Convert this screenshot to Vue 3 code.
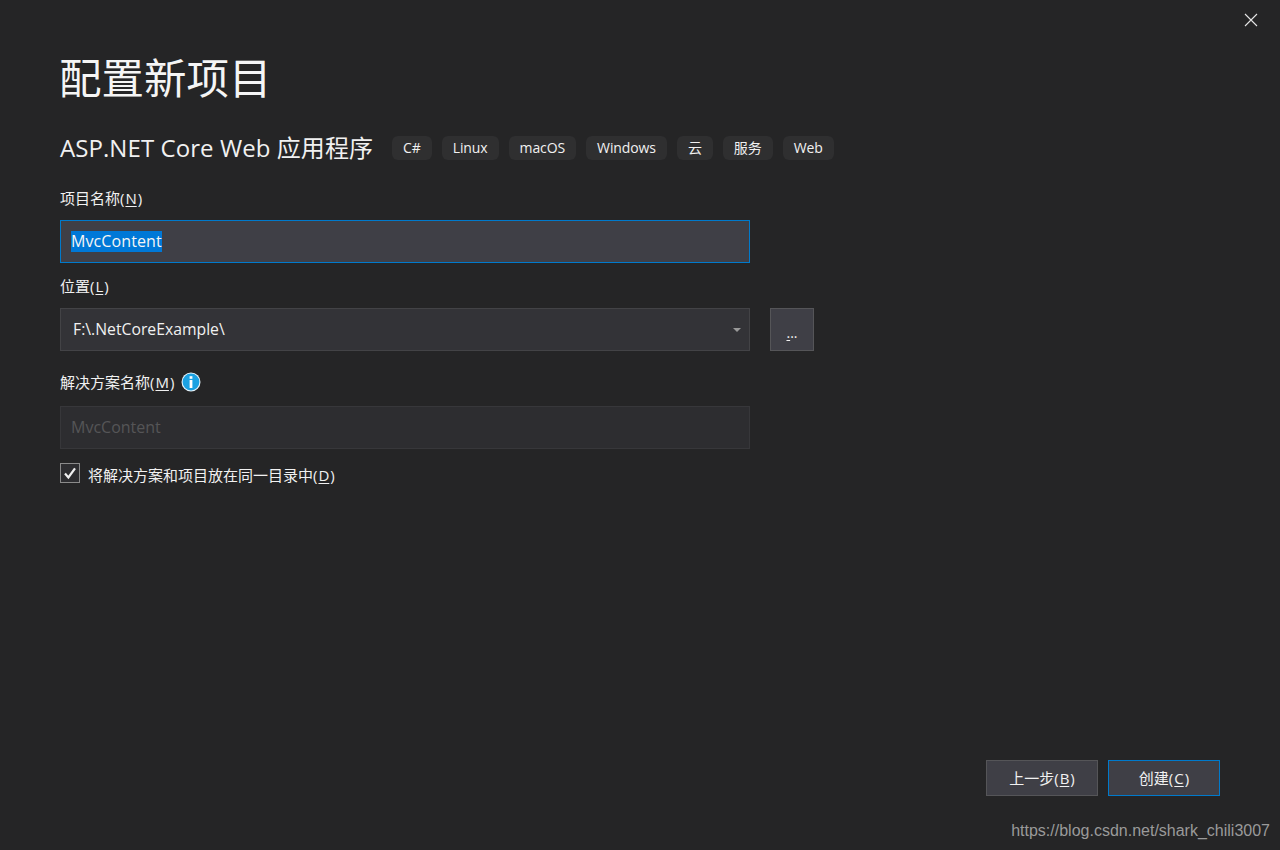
<script setup>
const tags = ['C#', 'Linux', 'macOS', 'Windows', '云', '服务', 'Web']
</script>

<template>
  <div class="dialog">
    <button class="close" aria-label="关闭">
      <svg width="14" height="14" viewBox="0 0 14 14"><path d="M1 1L13 13M13 1L1 13" stroke="#e6e6e6" stroke-width="1.1" fill="none" /></svg>
    </button>

    <h1 class="title">配置新项目</h1>

    <div class="subtitle-row">
      <h2 class="subtitle">ASP.NET Core Web 应用程序</h2>
      <ul class="tags">
        <li v-for="tag in tags" :key="tag" class="tag">{{ tag }}</li>
      </ul>
    </div>

    <label class="label first">项目名称(<u>N</u>)</label>
    <div class="field focused">
      <span class="selected">MvcContent</span>
    </div>

    <label class="label second">位置(<u>L</u>)</label>
    <div class="location-row">
      <div class="field select">
        <span>F:\.NetCoreExample\</span>
        <span class="caret"></span>
      </div>
      <button class="browse"><span><u>.</u>..</span></button>
    </div>

    <div class="label third">
      <span>解决方案名称(<u>M</u>)</span>
      <svg class="info" width="20" height="20" viewBox="0 0 20 20">
        <circle cx="10" cy="10" r="9.5" fill="#e8f4fb" />
        <circle cx="10" cy="10" r="8.4" fill="#1ba1e2" />
        <rect x="8.6" y="4.2" width="2.8" height="2.6" fill="#fff" />
        <rect x="8.6" y="8" width="2.8" height="8" fill="#fff" />
      </svg>
    </div>
    <div class="field disabled">MvcContent</div>

    <div class="check-row">
      <span class="checkbox">
        <svg width="14" height="14" viewBox="0 0 14 14"><path d="M2 7.5L5.4 11.4L12 2.4" stroke="#f0f0f0" stroke-width="2.2" fill="none" /></svg>
      </span>
      <span class="check-text">将解决方案和项目放在同一目录中(<u>D</u>)</span>
    </div>

    <div class="actions">
      <button class="btn">上一步(<u>B</u>)</button>
      <button class="btn primary">创建(<u>C</u>)</button>
    </div>

    <div class="watermark">https://blog.csdn.net/shark_chili3007</div>
  </div>
</template>

<style>
html, body {
  margin: 0;
  background: #252526;
}
</style>

<style scoped>
* {
  box-sizing: border-box;
}

.dialog {
  position: relative;
  width: 1280px;
  height: 850px;
  padding: 54px 60px 54px;
  display: flex;
  flex-direction: column;
  align-items: flex-start;
  overflow: hidden;
  background: #252526;
  color: #f1f1f1;
  font-family: "Open Sans", "Noto Sans CJK SC", sans-serif;
  font-size: 15px;
}

.close {
  position: absolute;
  top: 13px;
  right: 22px;
  width: 14px;
  height: 14px;
  padding: 0;
  border: none;
  background: none;
  line-height: 0;
}

.title {
  margin: 0 0 0 -1px;
  height: 48px;
  font-size: 42.5px;
  line-height: 48px;
  font-weight: 400;
  color: #f5f5f5;
}

.subtitle-row {
  display: flex;
  align-items: center;
  margin-top: 30px;
  height: 32px;
}

.subtitle {
  margin: 0;
  font-size: 24px;
  line-height: 32px;
  font-weight: 400;
  letter-spacing: 0.07px;
}

.tags {
  display: flex;
  gap: 10px;
  margin: 0 0 0 19px;
  padding: 0;
  list-style: none;
}

.tag {
  height: 24px;
  padding: 0 11px;
  border-radius: 6px;
  background: #2f2f30;
  font-size: 14px;
  line-height: 23px;
  letter-spacing: -0.1px;
}

.label {
  height: 22px;
  line-height: 20px;
  color: #f1f1f1;
}

.label u,
.check-text u,
.btn u {
  margin: 0 1px;
}

.first {
  margin-top: 24px;
}

.second {
  margin-top: 13px;
}

.third {
  margin-top: 21px;
  padding-bottom: 2px;
  display: flex;
  align-items: center;
  gap: 7px;
}

.info {
  display: block;
}

.field {
  width: 690px;
  height: 43px;
  margin-top: 0;
  padding: 0 10px;
  display: flex;
  align-items: center;
  border: 1px solid #434346;
  background: #333337;
  font-size: 15.75px;
}

.focused {
  margin-top: 10px;
  border-color: #007acc;
  background: #3f3f46;
}

.selected {
  background: #0078d7;
  color: #f5f5f5;
  font-size: 16px;
  letter-spacing: 0.1px;
  line-height: 21px;
  height: 21px;
}

.location-row {
  display: flex;
  gap: 20px;
  margin-top: 10px;
}

.select {
  padding: 0 8px 2px 12px;
  justify-content: space-between;
}

.caret {
  width: 0;
  height: 0;
  margin-top: 2px;
  border-left: 4px solid transparent;
  border-right: 4px solid transparent;
  border-top: 4px solid #999;
}

.browse {
  width: 44px;
  height: 43px;
  padding: 0;
  border: 1px solid #555558;
  background: #3f3f46;
  color: #f1f1f1;
  font: inherit;
  font-size: 14px;
  line-height: 1;
}

.browse span {
  display: block;
  margin-top: 7px;
}

.disabled {
  margin-top: 12px;
  padding-bottom: 2px;
  border-color: #37373a;
  background: #2d2d30;
  color: #555557;
  font-size: 16px;
}

.check-row {
  display: flex;
  align-items: center;
  gap: 8px;
  margin-top: 14px;
  height: 20px;
}

.checkbox {
  width: 20px;
  height: 20px;
  display: flex;
  align-items: center;
  justify-content: center;
  border: 1px solid #8a8a8a;
  background: #2d2d30;
}

.check-text {
  margin-top: 2px;
}

.actions {
  display: flex;
  gap: 10px;
  margin-top: auto;
  align-self: flex-end;
}

.btn {
  width: 112px;
  height: 36px;
  padding: 0 0 2px;
  border: 1px solid #555558;
  background: #3f3f46;
  color: #f1f1f1;
  font: inherit;
  font-size: 15px;
}

.primary {
  border-color: #007acc;
}

.watermark {
  position: absolute;
  right: 10px;
  bottom: 9px;
  font-family: "Liberation Sans", sans-serif;
  font-size: 16px;
  line-height: 20px;
  color: #9a9a9a;
}

u {
  text-underline-offset: 2px;
}
</style>
